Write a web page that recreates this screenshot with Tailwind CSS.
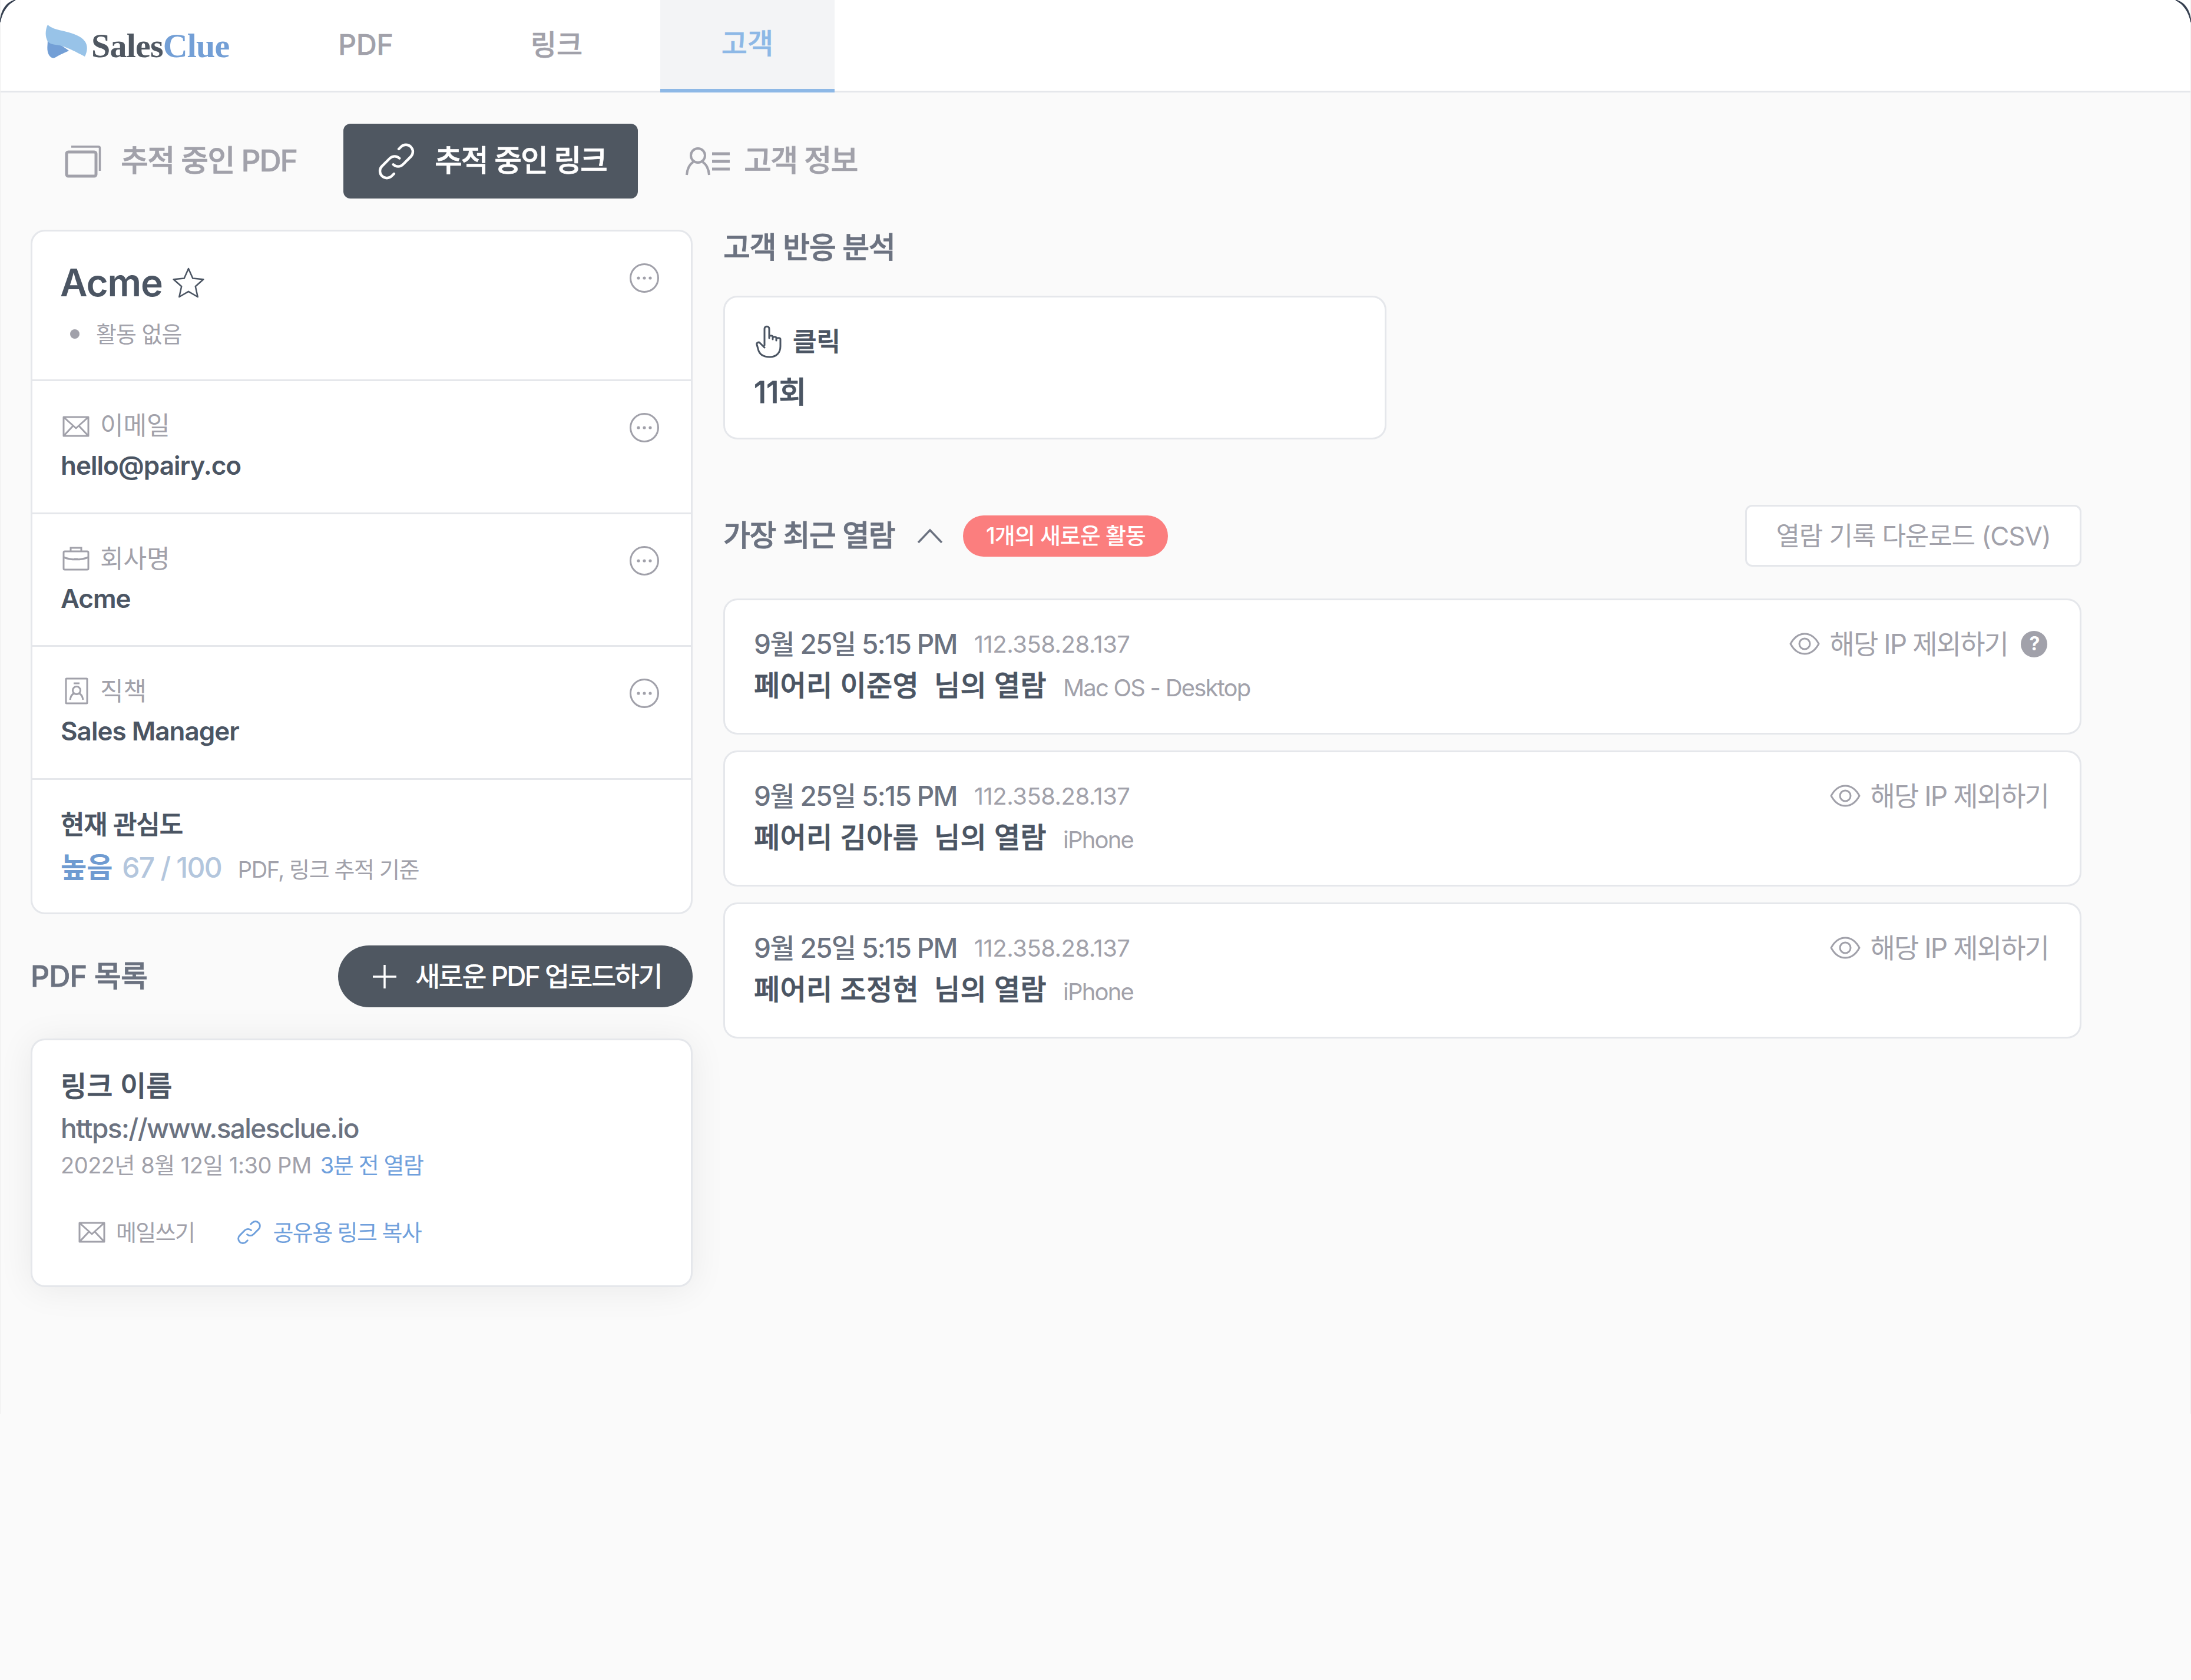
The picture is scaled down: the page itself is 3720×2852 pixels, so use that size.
<!DOCTYPE html>
<html lang="ko">
<head>
  <meta charset="UTF-8" />
  <title>SalesClue – 고객</title>
  <script src="https://cdn.jsdelivr.net/npm/@tailwindcss/browser@4"></script>
</head>
<body class="w-[3720px] h-[2852px] overflow-hidden relative bg-[#fafafa] font-['Inter','Noto_Sans_CJK_KR',sans-serif] text-[#4b5563]">

  <!-- shared icons -->
  <svg class="hidden">
    <symbol id="dots" viewBox="0 0 50 50"><circle cx="25" cy="25" r="23.5" fill="none" stroke="#a1a1aa" stroke-width="3"/><circle cx="15" cy="25" r="2.6" fill="#a1a1aa"/><circle cx="25" cy="25" r="2.6" fill="#a1a1aa"/><circle cx="35" cy="25" r="2.6" fill="#a1a1aa"/></symbol>
    <symbol id="mail" viewBox="0 0 46 36"><path d="M2 2h42v32H2zM2 2l21 19L44 2M2 34l16-17M44 34 28 17" fill="none" stroke="#a1a1aa" stroke-width="3" stroke-linejoin="round"/></symbol>
    <symbol id="eye" viewBox="0 0 52 38"><path d="M2 19C8 8 16 2 26 2s18 6 24 17c-6 11-14 17-24 17S8 30 2 19Z" fill="none" stroke="#a1a1aa" stroke-width="3" stroke-linejoin="round"/><circle cx="26" cy="19" r="9" fill="none" stroke="#a1a1aa" stroke-width="3"/></symbol>
    <symbol id="link" viewBox="0 0 24 24"><path d="M13.8 10.2a4 4 0 0 0-5.6 0l-4.600 4.600a4 4 0 1 0 5.700 5.700l1.300-1.300M10.200 13.800a4 4 0 0 0 5.600 0l4.600-4.600a4 4 0 1 0-5.700-5.700L13.400 4.800" fill="none" stroke="currentColor" stroke-width="1.500" stroke-linecap="round" stroke-linejoin="round"/></symbol>
  </svg>

  <!-- top bar -->
  <header class="h-[157px] bg-white border-b-[3px] border-[#e5e7eb] flex">
    <div class="w-[473px] pl-[77px] pt-[40px] flex items-start">
      <svg class="w-[72px] h-[66px] shrink-0" viewBox="0 0 72 66">
        <path d="M2 22C6 30 2 38 4 48c2 8 8 13 14 9 6-4 16-8 22-11L14 28Z" fill="#739fd6"/>
        <path d="M4 2C0 10-1 22 4 30c5 7 14 5 24 8 12 4 24 10 39 18 4-8 6-18 0-26C60 20 44 16 28 12 18 10 9 7 4 2Z" fill="#98c3e8"/>
      </svg>
      <div class="mt-[6px] ml-[6px] text-[58px] leading-[64px] font-bold font-['Liberation_Serif',serif] text-[#4f5761] tracking-[-0.8px]">Sales<span class="text-[#739fd6]">Clue</span></div>
    </div>
    <nav class="flex gap-[28px] h-[157px] text-[48px] font-medium text-[#a1a1aa] [-webkit-text-stroke:0.5px]">
      <a class="w-[296px] pb-[6px] flex items-center justify-center">PDF</a>
      <a class="w-[296px] pb-[6px] flex items-center justify-center">링크</a>
      <a class="w-[296px] pb-[3px] flex items-center justify-center bg-[#f3f4f6] text-[#8db8e6] border-b-[6px] border-[#8db8e6]">고객</a>
    </nav>
  </header>

  <!-- sub tabs -->
  <div class="h-[127px] mt-[53px] pl-[110px] flex items-center text-[51px] font-medium tracking-[-1.7px] text-[#a1a1aa] [-webkit-text-stroke:0.7px]">
    <div class="w-[473px] flex items-center">
      <svg class="w-[62px] h-[56px] shrink-0" viewBox="0 0 62 56" fill="none" stroke="#a1a1aa"><rect x="3" y="12" width="50" height="41" rx="3" stroke-width="5"/><path d="M11 3h46c1.500 0 2.500 1 2.500 2.500V44" stroke-width="3.500"/></svg>
      <span class="ml-[33px]">추적 중인 PDF</span>
    </div>
    <div class="w-[500px] h-[127px] rounded-[12px] bg-[#4f5761] text-white flex items-center pl-[55px]">
      <svg class="w-[70px] h-[70px] shrink-0"><use href="#link"/></svg>
      <span class="ml-[30px] tracking-[-2.100px]">추적 중인 링크</span>
    </div>
    <div class="ml-[80px] flex items-center">
      <svg class="w-[78px] h-[50px] shrink-0" viewBox="0 0 78 50" fill="none" stroke="#a1a1aa" stroke-width="4"><circle cx="22" cy="15" r="12"/><path d="M3 48c1-12 6-19 11-22M41 48c-1-12-6-19-11-22"/><path d="M46 12h30M46 25h30M46 38h30" stroke-width="5"/></svg>
      <span class="ml-[22px]">고객 정보</span>
    </div>
  </div>

  <main class="mt-[53px] pl-[52px] flex gap-[52px] items-start">
    <!-- left column -->
    <div class="w-[1124px] shrink-0">
      <section class="h-[1162px] rounded-[24px] border-[3px] border-[#e5e7eb] bg-white">
        <div class="h-[254px] border-b-[3px] border-[#e5e7eb] pl-[47px] pr-[54px] flex justify-between items-start">
          <div class="pt-[47px]">
            <div class="flex items-center h-[80px]">
              <span class="text-[64px] font-semibold tracking-[-1.2px] text-[#4b5563]">Acme</span>
              <svg class="w-[54px] h-[54px] ml-[17px]" viewBox="0 0 54 54"><path d="M27 3l7.300 16.500 18 1.800-13.500 12 3.900 17.700L27 41.800 11.300 51l3.900-17.700-13.500-12 18-1.800Z" fill="none" stroke="#4b5563" stroke-width="2.500" stroke-linejoin="round"/></svg>
            </div>
            <div class="mt-[22px] h-[50px] pl-[17px] flex items-center gap-[28px] text-[38px] tracking-[-1px] text-[#a1a1aa]">
              <span class="w-[16px] h-[16px] rounded-full bg-[#a1a1aa]"></span>활동 없음
            </div>
          </div>
          <svg class="w-[50px] h-[50px] mt-[54px]"><use href="#dots"/></svg>
        </div>

        <div class="h-[226px] border-b-[3px] border-[#e5e7eb] pl-[48px] pr-[54px] flex justify-between items-start">
          <div class="pt-[50px]">
            <div class="h-[50px] flex items-center gap-[18px] text-[43px] text-[#a1a1aa]">
              <svg class="w-[46px] h-[36px] ml-[3px] mt-[4px]"><use href="#mail"/></svg>이메일
            </div>
            <div class="mt-[13px] h-[60px] flex items-center text-[44px] font-semibold tracking-[-1px]">hello@pairy.co</div>
          </div>
          <svg class="w-[50px] h-[50px] mt-[54px]"><use href="#dots"/></svg>
        </div>

        <div class="h-[225px] border-b-[3px] border-[#e5e7eb] pl-[48px] pr-[54px] flex justify-between items-start">
          <div class="pt-[50px]">
            <div class="h-[50px] flex items-center gap-[18px] text-[43px] text-[#a1a1aa]">
              <svg class="w-[46px] h-[42px] ml-[3px]" viewBox="0 0 46 42" fill="none" stroke="#a1a1aa" stroke-width="3"><rect x="2" y="9" width="42" height="31" rx="2"/><path d="M14 9V3h18v6M2 19c12 5 30 5 42 0M20 22h6"/></svg>회사명
            </div>
            <div class="mt-[13px] h-[60px] flex items-center text-[44px] font-semibold tracking-[-1px]">Acme</div>
          </div>
          <svg class="w-[50px] h-[50px] mt-[54px]"><use href="#dots"/></svg>
        </div>

        <div class="h-[226px] border-b-[3px] border-[#e5e7eb] pl-[48px] pr-[54px] flex justify-between items-start">
          <div class="pt-[50px]">
            <div class="h-[50px] flex items-center gap-[18px] text-[43px] text-[#a1a1aa]">
              <svg class="w-[46px] h-[46px] ml-[3px]" viewBox="0 0 46 46" fill="none" stroke="#a1a1aa" stroke-width="3"><rect x="6" y="2" width="36" height="42" rx="1"/><path d="M19 10h10"/><circle cx="24" cy="22" r="6.500"/><path d="M13 38c1-6 4-10 7-11M35 38c-1-6-4-10-7-11"/></svg>직책
            </div>
            <div class="mt-[13px] h-[60px] flex items-center text-[44px] font-semibold tracking-[-1px]">Sales Manager</div>
          </div>
          <svg class="w-[50px] h-[50px] mt-[54px]"><use href="#dots"/></svg>
        </div>

        <div class="pl-[48px] pt-[48px]">
          <div class="h-[56px] flex items-center text-[44px] font-medium tracking-[-1.2px] [-webkit-text-stroke:0.8px]">현재 관심도</div>
          <div class="mt-[15px] h-[60px] flex items-center">
            <span class="text-[48px] font-bold text-[#6f9bd1]">높음</span>
            <span class="ml-[16px] text-[48px] font-medium tracking-[-1.8px] text-[#b3c6dd]">67 / 100</span>
            <span class="ml-[28px] mt-[7px] text-[38px] tracking-[-1.4px] text-[#a1a1aa]">PDF, 링크 추적 기준</span>
          </div>
        </div>
      </section>

      <div class="mt-[53px] h-[105px] flex items-center justify-between">
        <h2 class="text-[50px] font-medium tracking-[-0.8px] text-[#6b7280] [-webkit-text-stroke:0.8px]">PDF 목록</h2>
        <button class="w-[602px] h-[105px] rounded-full bg-[#4f5761] text-white text-[46px] font-medium tracking-[-2.7px] flex items-center pl-[58px]">
          <svg class="w-[42px] h-[42px] shrink-0" viewBox="0 0 42 42"><path d="M21 1v40M1 21h40" stroke="#fff" stroke-width="3.500"/></svg>
          <span class="ml-[31px]">새로운 PDF 업로드하기</span>
        </button>
      </div>

      <article class="mt-[53px] h-[422px] rounded-[24px] border-[3px] border-[#e5e7eb] bg-white shadow-[0_4px_60px_rgba(0,0,0,0.07)] pl-[48px] pt-[50px]">
        <div class="h-[56px] flex items-center text-[48px] font-medium [-webkit-text-stroke:0.8px]">링크 이름</div>
        <div class="mt-[13px] h-[60px] flex items-center text-[46px] font-medium tracking-[-1.6px] text-[#6b7280]">https://www.salesclue.io</div>
        <div class="mt-[5px] h-[56px] flex items-center text-[38px] text-[#a1a1aa]">
          <span class="tracking-[-0.5px]">2022년 8월 12일 1:30 PM</span>
          <span class="ml-[15px] tracking-[-1.4px] text-[#6fa0dc]">3분 전 열람</span>
        </div>
        <div class="mt-[58px] h-[56px] pl-[30px] flex items-center text-[38px] tracking-[-1.6px]">
          <svg class="w-[46px] h-[36px] shrink-0"><use href="#mail"/></svg>
          <span class="ml-[18px] text-[#a1a1aa]">메일쓰기</span>
          <svg class="w-[46px] h-[46px] ml-[70px] shrink-0 text-[#6fa0dc]"><use href="#link"/></svg>
          <span class="ml-[17px] text-[#6fa0dc]">공유용 링크 복사</span>
        </div>
      </article>
    </div>

    <!-- right column -->
    <div class="w-[2306px] shrink-0">
      <h2 class="h-[56px] mt-[2px] flex items-center text-[50px] font-medium tracking-[-1.4px] text-[#6b7280] [-webkit-text-stroke:0.8px]">고객 반응 분석</h2>
      <div class="mt-[54px] w-[1126px] h-[244px] rounded-[24px] border-[3px] border-[#e5e7eb] bg-white pl-[49px] pt-[45px]">
        <div class="h-[60px] flex items-center text-[44px] font-medium [-webkit-text-stroke:0.8px]">
          <svg class="w-[46px] h-[56px] ml-[3px] shrink-0" viewBox="0 0 46 56" fill="none" stroke="#4b5563" stroke-width="3" stroke-linejoin="round" stroke-linecap="round"><path d="M15 34V6c0-5 8-5 8 0v16M23 20c0-3 6-3 6 0v4M29 22c0-3 6-3 6 0v4M35 24c0-3 7-3 7 0v12c0 11-7 18-18 18S6 50 4 40l-2-7c-1-3 3-5 5-3l8 8"/></svg>
          <span class="ml-[17px]">클릭</span>
        </div>
        <div class="mt-[25px] h-[62px] flex items-center text-[51px] font-medium [-webkit-text-stroke:0.8px]">11회</div>
      </div>

      <div class="mt-[111px] h-[105px] flex items-center">
        <h2 class="text-[50px] font-medium tracking-[-1.4px] text-[#6b7280] [-webkit-text-stroke:0.8px]">가장 최근 열람</h2>
        <svg class="w-[44px] h-[26px] ml-[38px]" viewBox="0 0 44 26"><path d="M2 24 22 3l20 21" fill="none" stroke="#6b7280" stroke-width="3.500"/></svg>
        <span class="ml-[34px] w-[348px] h-[70px] rounded-full bg-[#fb7e7e] text-white text-[38px] font-medium tracking-[-1px] flex items-center justify-center">1개의 새로운 활동</span>
        <button class="ml-auto w-[571px] h-[105px] rounded-[12px] border-[3px] border-[#e5e7eb] bg-white text-[44px] tracking-[-1.1px] text-[#a1a1aa] flex items-center justify-center">열람 기록 다운로드 (CSV)</button>
      </div>

      <div class="mt-[54px] flex flex-col gap-[27px]">
        <div class="h-[231px] rounded-[24px] border-[3px] border-[#e5e7eb] bg-white pl-[49px] pr-[55px] pt-[48px] flex justify-between items-start">
          <div>
            <div class="h-[52px] flex items-center">
              <span class="text-[46px] font-medium tracking-[-1.7px] text-[#6b7280]">9월 25일 5:15 PM</span>
              <span class="ml-[29px] mt-[2px] text-[40px] tracking-[-0.5px] text-[#a1a1aa]">112.358.28.137</span>
            </div>
            <div class="mt-[15px] h-[60px] flex items-center">
              <span class="text-[48px] font-medium tracking-[0.3px] [-webkit-text-stroke:0.8px]">페어리 이준영&nbsp;&nbsp;님의 열람</span>
              <span class="ml-[28px] mt-[8px] text-[40px] tracking-[-1.8px] text-[#a1a1aa]">Mac OS - Desktop</span>
            </div>
          </div>
          <div class="h-[52px] flex items-center text-[46px] tracking-[-1.9px] text-[#a1a1aa]">
            <svg class="w-[52px] h-[38px]"><use href="#eye"/></svg>
            <span class="ml-[16px]">해당 IP 제외하기</span>
            <span class="ml-[22px] w-[45px] h-[45px] rounded-full bg-[#a1a1aa] text-white text-[32px] font-bold flex items-center justify-center">?</span>
          </div>
        </div>

        <div class="h-[231px] rounded-[24px] border-[3px] border-[#e5e7eb] bg-white pl-[49px] pr-[53px] pt-[48px] flex justify-between items-start">
          <div>
            <div class="h-[52px] flex items-center">
              <span class="text-[46px] font-medium tracking-[-1.7px] text-[#6b7280]">9월 25일 5:15 PM</span>
              <span class="ml-[29px] mt-[2px] text-[40px] tracking-[-0.5px] text-[#a1a1aa]">112.358.28.137</span>
            </div>
            <div class="mt-[15px] h-[60px] flex items-center">
              <span class="text-[48px] font-medium tracking-[0.3px] [-webkit-text-stroke:0.8px]">페어리 김아름&nbsp;&nbsp;님의 열람</span>
              <span class="ml-[28px] mt-[8px] text-[40px] tracking-[-1.8px] text-[#a1a1aa]">iPhone</span>
            </div>
          </div>
          <div class="h-[52px] flex items-center text-[46px] tracking-[-1.9px] text-[#a1a1aa]">
            <svg class="w-[52px] h-[38px]"><use href="#eye"/></svg>
            <span class="ml-[16px]">해당 IP 제외하기</span>
          </div>
        </div>

        <div class="h-[231px] rounded-[24px] border-[3px] border-[#e5e7eb] bg-white pl-[49px] pr-[53px] pt-[48px] flex justify-between items-start">
          <div>
            <div class="h-[52px] flex items-center">
              <span class="text-[46px] font-medium tracking-[-1.7px] text-[#6b7280]">9월 25일 5:15 PM</span>
              <span class="ml-[29px] mt-[2px] text-[40px] tracking-[-0.5px] text-[#a1a1aa]">112.358.28.137</span>
            </div>
            <div class="mt-[15px] h-[60px] flex items-center">
              <span class="text-[48px] font-medium tracking-[0.3px] [-webkit-text-stroke:0.8px]">페어리 조정현&nbsp;&nbsp;님의 열람</span>
              <span class="ml-[28px] mt-[8px] text-[40px] tracking-[-1.8px] text-[#a1a1aa]">iPhone</span>
            </div>
          </div>
          <div class="h-[52px] flex items-center text-[46px] tracking-[-1.9px] text-[#a1a1aa]">
            <svg class="w-[52px] h-[38px]"><use href="#eye"/></svg>
            <span class="ml-[16px]">해당 IP 제외하기</span>
          </div>
        </div>
      </div>
    </div>
  </main>

  <!-- window edge and corner crescents -->
  <div class="absolute left-0 right-0 top-0 h-[2400px] border-x border-[#f0f0f0] pointer-events-none"></div>
  <svg class="absolute left-0 top-0 w-[30px] h-[40px]" viewBox="0 0 30 40"><path d="M26 0C12 4 2 16 0 38 3 20 13 6 26 0Z" fill="#374151" stroke="#374151" stroke-width="1.500"/></svg>
  <svg class="absolute right-0 top-0 w-[30px] h-[40px]" viewBox="0 0 30 40"><path d="M4 0c14 4 24 16 26 38C27 20 17 6 4 0Z" fill="#374151" stroke="#374151" stroke-width="1.500"/></svg>
</body>
</html>
